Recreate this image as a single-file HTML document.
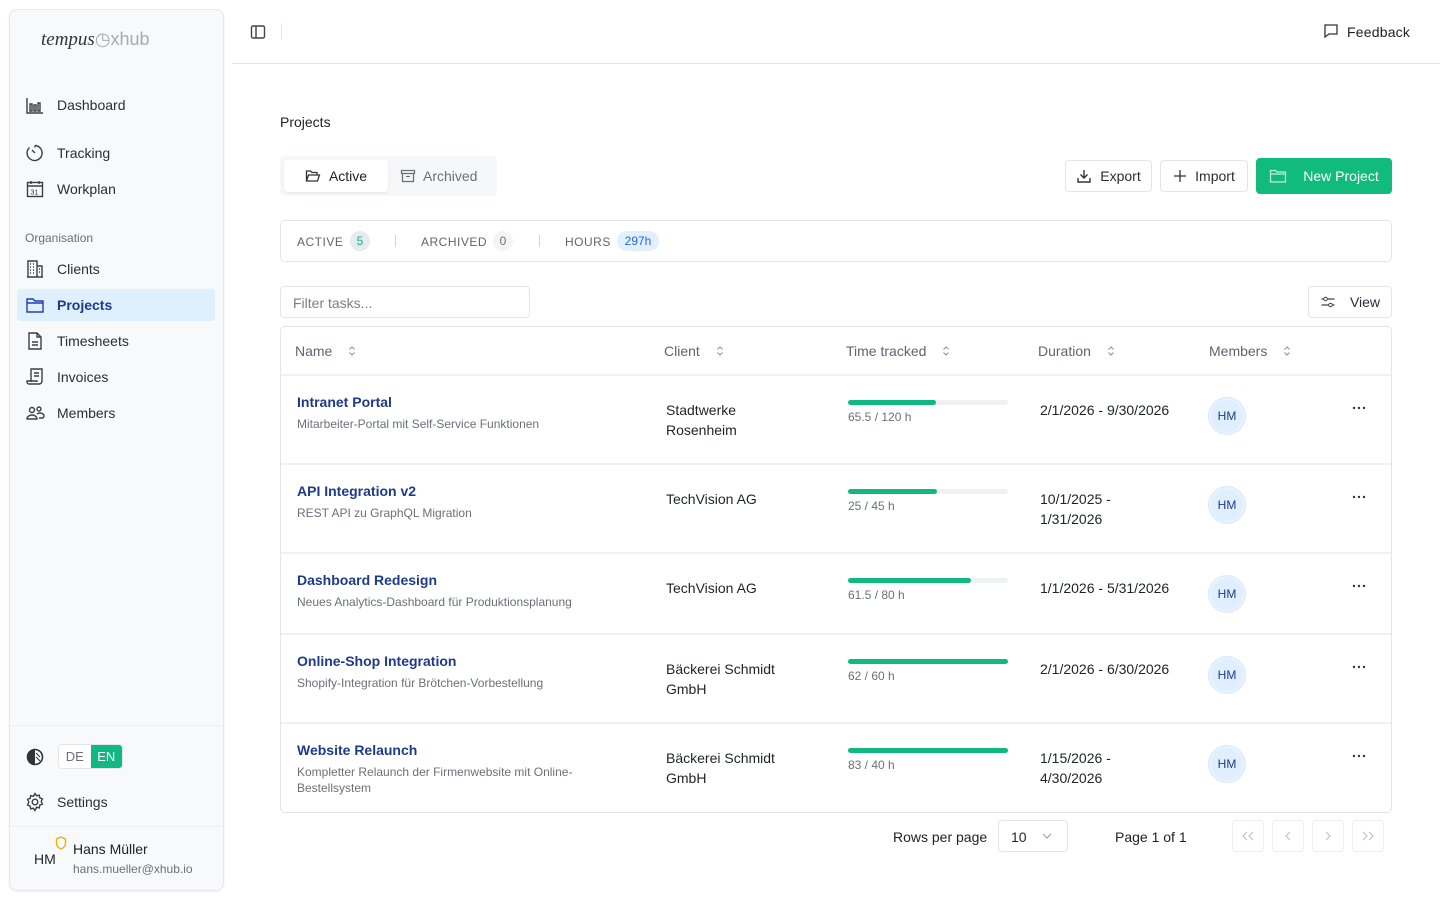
<!DOCTYPE html>
<html><head><meta charset="utf-8"><style>
*{box-sizing:border-box;margin:0;padding:0}
body{width:1440px;height:900px;background:#fff;font-family:"Liberation Sans",sans-serif;color:#1f2328;position:relative;overflow:hidden;font-size:14px}
.abs{position:absolute}
.side{left:9px;top:9px;width:215px;height:882px;background:#f8f9fb;border:1px solid #e6e8eb;border-radius:8px;box-shadow:0 1px 2px rgba(0,0,0,.06)}
.nav{position:absolute;left:16px;display:flex;align-items:center;gap:12px;font-size:14px;color:#2a2e35}
.nav svg{width:20px;height:20px;stroke:#3a3f47;fill:none;stroke-width:1.4}
.btn{position:absolute;border:1px solid #e3e5e8;border-radius:4px;background:#fff;display:flex;align-items:center;justify-content:center;gap:8px;font-size:14px;color:#2a2e35}
.row{position:absolute;left:281px;width:1110px;border-top:1px solid #eceef1}
.t{position:absolute;font-size:14px}
.nm{color:#1e3a8a;font-weight:bold;font-size:14px}
.ds{color:#6b7079;font-size:12px;margin-top:6px;line-height:16px}
.bar{position:absolute;width:160px;height:5px;background:#f0f1f3;border-radius:3px}
.bar i{display:block;height:5px;background:#10b981;border-radius:3px}
.hm{position:absolute;width:36px;height:36px;border-radius:50%;background:#e0efff;border:2px solid #eaf3fd;box-shadow:0 0 0 1px #d7e8fb;color:#1e3a8a;font-size:12px;display:flex;align-items:center;justify-content:center}
.dots{position:absolute;left:1352px;width:14px;height:4px}
.th{position:absolute;top:343px;font-size:14px;color:#5f6570;display:flex;align-items:center}
.srt{margin-left:16px;width:8px;height:12px}
.pg{position:absolute;top:820px;width:32px;height:32px;border:1px solid #eceef1;border-radius:4px;display:flex;align-items:center;justify-content:center}
</style></head><body>
<div class="abs side"></div>
<div class="abs" style="left:41px;top:29px;font-family:'Liberation Serif',serif;font-style:italic;font-size:19px;color:#333">tempus<span style="font-style:normal;font-family:'Liberation Sans';color:#aaa;font-size:18px">◷xhub</span></div>

<div class="nav" style="top:95px;left:25px"><svg viewBox="0 0 20 20"><path d="M2 3v15h16M5 9h2v7H5zM9 10h2v6H9zM13 8h2v8h-2z"/></svg>Dashboard</div>
<div class="nav" style="top:143px;left:25px"><svg viewBox="0 0 20 20"><path d="M4.5 4.5A7.5 7.5 0 1010 2.5"/><path d="M10 2.5v2M10 10l-3-3"/></svg>Tracking</div>
<div class="nav" style="top:179px;left:25px"><svg viewBox="0 0 20 20"><rect x="2.5" y="3.5" width="15" height="14"/><path d="M2.5 7h15M6 2v3M14 2v3"/><text x="5.5" y="15.5" font-size="7" stroke="none" fill="#333">31</text></svg>Workplan</div>
<div class="abs" style="left:25px;top:231px;font-size:12px;color:#6b7079">Organisation</div>
<div class="nav" style="top:259px;left:25px"><svg viewBox="0 0 20 20"><path d="M3 18V2h9v16M12 7h5v11M2 18h16M5 5h1M8 5h1M5 8h1M8 8h1M5 11h1M8 11h1M5 14h1M8 14h1M14 10h1M14 13h1"/></svg>Clients</div>
<div class="abs" style="left:17px;top:289px;width:198px;height:32px;background:#dfeffc;border-radius:4px"></div>
<div class="nav" style="top:295px;left:25px;color:#1e3a8a;font-weight:bold"><svg viewBox="0 0 20 20" style="stroke:#1e40af"><path d="M2 4h6l2 2h8v11H2zM2 8h16"/></svg>Projects</div>
<div class="nav" style="top:331px;left:25px"><svg viewBox="0 0 20 20"><path d="M4 2h8l4 4v12H4zM12 2v4h4M7 11h6M7 14h6"/></svg>Timesheets</div>
<div class="nav" style="top:367px;left:25px"><svg viewBox="0 0 20 20"><path d="M6 15V2h11v12a3 3 0 01-3 3H4a2 2 0 01-2-2v-1h10v1M9 6h5M9 9h5"/></svg>Invoices</div>
<div class="nav" style="top:403px;left:25px"><svg viewBox="0 0 20 20"><circle cx="7" cy="7" r="2.5"/><circle cx="14" cy="6" r="2"/><path d="M2 16a5 4 0 0110 0zM12 11a4 3 0 016 4h-4"/></svg>Members</div>

<div class="abs" style="left:10px;top:725px;width:213px;border-top:1px solid #eceef1"></div>
<svg class="abs" style="left:25px;top:747px" width="20" height="20" viewBox="0 0 20 20"><circle cx="10" cy="10" r="7.5" fill="none" stroke="#333" stroke-width="1.6"/><path d="M10 2.5a7.5 7.5 0 000 15z" fill="#333"/><path d="M11 6l4 4M11 10l4 4" stroke="#333"/></svg>
<div class="abs" style="left:58px;top:744px;width:65px;height:25px;border:1px solid #e3e5e8;border-radius:4px;display:flex;font-size:13px;overflow:hidden"><span style="flex:1;display:flex;align-items:center;justify-content:center;color:#6b7079;background:#fff">DE</span><span style="flex:1;display:flex;align-items:center;justify-content:center;color:#fff;background:#10b981">EN</span></div>
<div class="nav" style="top:792px;left:25px"><svg viewBox="0 0 20 20"><circle cx="10" cy="10" r="2.8"/><path d="M10 1.5l1.6 2.3 2.7-.7.5 2.8 2.6 1-1.2 2.6 1.2 2.6-2.6 1-.5 2.8-2.7-.7L10 18.5l-1.6-2.3-2.7.7-.5-2.8-2.6-1L3.8 10 2.6 7.4l2.6-1 .5-2.8 2.7.7z"/></svg>Settings</div>
<div class="abs" style="left:10px;top:826px;width:213px;border-top:1px solid #eceef1"></div>
<div class="abs" style="left:34px;top:851px;font-size:14px">HM</div>
<svg class="abs" style="left:55px;top:836px" width="12" height="14" viewBox="0 0 12 14"><path d="M6 1l4.5 2v4c0 3-2 5-4.5 6C3.5 12 1.5 10 1.5 7V3z" fill="none" stroke="#eab308" stroke-width="1.4"/></svg>
<div class="abs" style="left:73px;top:841px;font-size:14px;color:#222">Hans Müller</div>
<div class="abs" style="left:73px;top:862px;font-size:12px;color:#6b7079">hans.mueller@xhub.io</div>

<svg class="abs" style="left:250px;top:24px" width="16" height="16" viewBox="0 0 16 16"><rect x="1.5" y="2" width="13" height="12" rx="1.5" fill="none" stroke="#444" stroke-width="1.4"/><path d="M6 2v12" stroke="#444" stroke-width="1.4"/></svg>
<div class="abs" style="left:281px;top:23px;height:17px;border-left:1px solid #e3e5e8"></div>
<div class="abs" style="left:232px;top:63px;width:1208px;border-top:1px solid #e6e8eb"></div>
<svg class="abs" style="left:1323px;top:23px" width="16" height="16" viewBox="0 0 16 16"><path d="M2 2h12v9H6l-4 3z" fill="none" stroke="#333" stroke-width="1.3"/></svg>
<div class="abs" style="left:1347px;top:24px;font-size:14px;color:#222;letter-spacing:.2px">Feedback</div>

<div class="abs" style="left:280px;top:114px;font-size:14px;color:#222">Projects</div>
<div class="abs" style="left:280px;top:156px;width:217px;height:40px;background:#f6f7f9;border-radius:5px"></div>
<div class="abs" style="left:284px;top:160px;width:104px;height:32px;background:#fff;border-radius:4px;box-shadow:0 1px 2px rgba(0,0,0,.08);display:flex;align-items:center;justify-content:center;gap:8px;font-size:14px;color:#222"><svg width="16" height="16" viewBox="0 0 16 16"><path d="M1.5 13V3h4l1.5 1.5h5V7M1.5 13l2-6h11l-2 6z" fill="none" stroke="#333" stroke-width="1.3"/></svg>Active</div>
<div class="abs" style="left:400px;top:160px;height:32px;display:flex;align-items:center;gap:7px;font-size:14px;color:#6b7079"><svg width="16" height="16" viewBox="0 0 16 16"><path d="M1.5 2.5h13v3h-13zM2.5 5.5v8h11v-8M6 8.5h4" fill="none" stroke="#6b7079" stroke-width="1.3"/></svg>Archived</div>

<div class="btn" style="left:1065px;top:160px;width:87px;height:32px"><svg width="16" height="16" viewBox="0 0 16 16"><path d="M8 2v8M4.5 6.5L8 10l3.5-3.5M2 10v4h12v-4" fill="none" stroke="#333" stroke-width="1.4"/></svg>Export</div>
<div class="btn" style="left:1160px;top:160px;width:88px;height:32px"><svg width="14" height="14" viewBox="0 0 14 14"><path d="M7 1v12M1 7h12" stroke="#333" stroke-width="1.3"/></svg>Import</div>
<div class="btn" style="left:1256px;top:158px;width:136px;height:36px;background:#10bb7d;border-color:#10bb7d;color:#fff;gap:16px"><svg width="18" height="16" viewBox="0 0 18 16"><path d="M1.5 2.5h5l1.5 1.5h8.5v10h-15zM1.5 6h15" fill="none" stroke="#bdf0dc" stroke-width="1.3"/></svg>New Project</div>

<div class="abs" style="left:280px;top:220px;width:1112px;height:42px;border:1px solid #e3e5e8;border-radius:5px"></div>
<div class="abs" style="left:297px;top:235px;font-size:12px;color:#5f6570;letter-spacing:.5px">ACTIVE</div>
<div class="abs" style="left:350px;top:231px;width:20px;height:20px;border-radius:50%;background:#e6ebef;color:#10b981;font-size:12px;display:flex;align-items:center;justify-content:center">5</div>
<div class="abs" style="left:395px;top:235px;height:12px;border-left:1px solid #d0d3d8"></div>
<div class="abs" style="left:421px;top:235px;font-size:12px;color:#5f6570;letter-spacing:.5px">ARCHIVED</div>
<div class="abs" style="left:493px;top:231px;width:20px;height:20px;border-radius:50%;background:#f3f4f6;color:#6b7079;font-size:12px;display:flex;align-items:center;justify-content:center">0</div>
<div class="abs" style="left:539px;top:235px;height:12px;border-left:1px solid #d0d3d8"></div>
<div class="abs" style="left:565px;top:235px;font-size:12px;color:#5f6570;letter-spacing:.5px">HOURS</div>
<div class="abs" style="left:617px;top:231px;width:42px;height:20px;border-radius:10px;background:#e2f0fe;color:#2563eb;font-size:12px;display:flex;align-items:center;justify-content:center">297h</div>

<div class="abs" style="left:280px;top:286px;width:250px;height:32px;border:1px solid #e3e5e8;border-radius:4px;padding:8px 12px;font-size:14px;color:#7a7f87">Filter tasks...</div>
<div class="btn" style="left:1308px;top:286px;width:84px;height:32px;gap:14px"><svg width="16" height="16" viewBox="0 0 16 16"><path d="M1.5 5h13M1.5 11h13" stroke="#444" stroke-width="1.2"/><circle cx="5.5" cy="5" r="1.8" fill="#fff" stroke="#444"/><circle cx="10.5" cy="11" r="1.8" fill="#fff" stroke="#444"/></svg>View</div>

<div class="abs" style="left:280px;top:326px;width:1112px;height:487px;border:1px solid #e3e5e8;border-radius:5px"></div>
<svg width="0" height="0" style="position:absolute"><defs><symbol id="s" viewBox="0 0 8 12"><path d="M1.5 4.5L4 2l2.5 2.5M1.5 7.5L4 10l2.5-2.5" fill="none" stroke="#8a9098" stroke-width="1"/></symbol></defs></svg>
<div class="th" style="left:295px">Name<svg class="srt"><use href="#s"/></svg></div>
<div class="th" style="left:664px">Client<svg class="srt"><use href="#s"/></svg></div>
<div class="th" style="left:846px">Time tracked<svg class="srt"><use href="#s"/></svg></div>
<div class="th" style="left:1038px">Duration<svg class="srt"><use href="#s"/></svg></div>
<div class="th" style="left:1209px">Members<svg class="srt"><use href="#s"/></svg></div>
<div class="row" style="top:374px;border-top:2px solid #eef0f2"></div>
<div class="row" style="top:463px;border-top:2px solid #eef0f2"></div>
<div class="row" style="top:552px;border-top:2px solid #eef0f2"></div>
<div class="row" style="top:633px;border-top:2px solid #eef0f2"></div>
<div class="row" style="top:722px;border-top:2px solid #eef0f2"></div>

<svg width="0" height="0" style="position:absolute"><defs><symbol id="d" viewBox="0 0 14 4"><circle cx="2" cy="2" r="1.2" fill="#333"/><circle cx="7" cy="2" r="1.2" fill="#333"/><circle cx="12" cy="2" r="1.2" fill="#333"/></symbol></defs></svg>

<div class="t" style="left:297px;top:394px"><div class="nm">Intranet Portal</div><div class="ds">Mitarbeiter-Portal mit Self-Service Funktionen</div></div>
<div class="t" style="left:666px;top:400px;line-height:20px">Stadtwerke<br>Rosenheim</div>
<div class="bar" style="left:848px;top:400px"><i style="width:88px"></i></div>
<div class="t" style="left:848px;top:410px;font-size:12px;color:#6b7079">65.5 / 120 h</div>
<div class="t" style="left:1040px;top:402px">2/1/2026 - 9/30/2026</div>
<div class="hm" style="left:1209px;top:398px">HM</div>
<svg class="dots" style="top:406px"><use href="#d"/></svg>

<div class="t" style="left:297px;top:483px"><div class="nm">API Integration v2</div><div class="ds">REST API zu GraphQL Migration</div></div>
<div class="t" style="left:666px;top:491px">TechVision AG</div>
<div class="bar" style="left:848px;top:489px"><i style="width:89px"></i></div>
<div class="t" style="left:848px;top:499px;font-size:12px;color:#6b7079">25 / 45 h</div>
<div class="t" style="left:1040px;top:489px;line-height:20px">10/1/2025 -<br>1/31/2026</div>
<div class="hm" style="left:1209px;top:487px">HM</div>
<svg class="dots" style="top:495px"><use href="#d"/></svg>

<div class="t" style="left:297px;top:572px"><div class="nm">Dashboard Redesign</div><div class="ds">Neues Analytics-Dashboard für Produktionsplanung</div></div>
<div class="t" style="left:666px;top:580px">TechVision AG</div>
<div class="bar" style="left:848px;top:578px"><i style="width:123px"></i></div>
<div class="t" style="left:848px;top:588px;font-size:12px;color:#6b7079">61.5 / 80 h</div>
<div class="t" style="left:1040px;top:580px">1/1/2026 - 5/31/2026</div>
<div class="hm" style="left:1209px;top:576px">HM</div>
<svg class="dots" style="top:584px"><use href="#d"/></svg>

<div class="t" style="left:297px;top:653px"><div class="nm">Online-Shop Integration</div><div class="ds">Shopify-Integration für Brötchen-Vorbestellung</div></div>
<div class="t" style="left:666px;top:659px;line-height:20px">Bäckerei Schmidt<br>GmbH</div>
<div class="bar" style="left:848px;top:659px"><i style="width:160px"></i></div>
<div class="t" style="left:848px;top:669px;font-size:12px;color:#6b7079">62 / 60 h</div>
<div class="t" style="left:1040px;top:661px">2/1/2026 - 6/30/2026</div>
<div class="hm" style="left:1209px;top:657px">HM</div>
<svg class="dots" style="top:665px"><use href="#d"/></svg>

<div class="t" style="left:297px;top:742px;width:320px"><div class="nm">Website Relaunch</div><div class="ds">Kompletter Relaunch der Firmenwebsite mit Online-Bestellsystem</div></div>
<div class="t" style="left:666px;top:748px;line-height:20px">Bäckerei Schmidt<br>GmbH</div>
<div class="bar" style="left:848px;top:748px"><i style="width:160px"></i></div>
<div class="t" style="left:848px;top:758px;font-size:12px;color:#6b7079">83 / 40 h</div>
<div class="t" style="left:1040px;top:748px;line-height:20px">1/15/2026 -<br>4/30/2026</div>
<div class="hm" style="left:1209px;top:746px">HM</div>
<svg class="dots" style="top:754px"><use href="#d"/></svg>

<div class="abs" style="left:893px;top:829px;font-size:14px;color:#222">Rows per page</div>
<div class="abs" style="left:998px;top:820px;width:70px;height:32px;border:1px solid #e3e5e8;border-radius:4px;padding:8px 12px;font-size:14px">10<svg style="position:absolute;left:43px;top:12px" width="10" height="6" viewBox="0 0 10 6"><path d="M1 1l4 4 4-4" fill="none" stroke="#999"/></svg></div>
<div class="abs" style="left:1115px;top:829px;font-size:14px;color:#222">Page 1 of 1</div>
<div class="pg" style="left:1232px"><svg width="14" height="10" viewBox="0 0 14 10"><path d="M6 1L2 5l4 4M12 1L8 5l4 4" fill="none" stroke="#b8bcc2"/></svg></div>
<div class="pg" style="left:1272px"><svg width="8" height="10" viewBox="0 0 8 10"><path d="M6 1L2 5l4 4" fill="none" stroke="#b8bcc2"/></svg></div>
<div class="pg" style="left:1312px"><svg width="8" height="10" viewBox="0 0 8 10"><path d="M2 1l4 4-4 4" fill="none" stroke="#b8bcc2"/></svg></div>
<div class="pg" style="left:1352px"><svg width="14" height="10" viewBox="0 0 14 10"><path d="M2 1l4 4-4 4M8 1l4 4-4 4" fill="none" stroke="#b8bcc2"/></svg></div>
</body></html>
